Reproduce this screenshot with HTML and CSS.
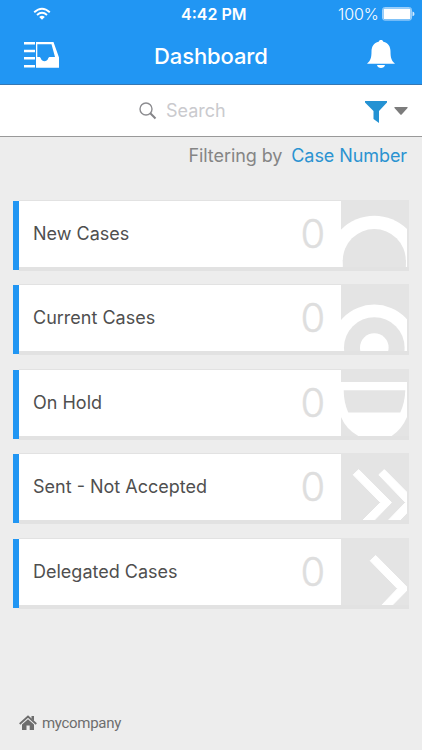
FILE: index.html
```
<!DOCTYPE html>
<html lang="en">
<head>
<meta charset="utf-8">
<title>Dashboard</title>
<link rel="stylesheet" href="styles.css">
</head>
<body>
<header class="top">
  <div class="status">
    <svg class="wifi" viewBox="0 0 18 14" width="18" height="14"><g fill="none" stroke="#fff" stroke-width="1.9"><path d="M1.2 5.2Q9-1.8 16.8 5.2"/><path d="M4 8Q9 3.600 14 8"/></g><path d="M6.200 9.900Q9 7.700 11.800 9.900L9 12.700z" fill="#fff"/></svg>
    <span class="time">4:42 PM</span>
    <span class="percent">100%</span>
    <svg class="battery" viewBox="0 0 33 14" width="33" height="14"><rect x=".6" y=".6" width="28.800" height="12.500" rx="2" fill="#2196f3" stroke="#a9d6fb"/><rect x="1.500" y="1.500" width="27" height="10.700" rx="1" fill="#fff"/><path d="M30.500 4.500q2 .5 2 2.400t-2 2.400z" fill="#d3eafd"/></svg>
  </div>
  <div class="nav">
    <svg class="inbox" viewBox="0 0 36 28" width="36" height="28"><path d="M0 1h11v2.500H0zM0 8.800h11v2.500H0zM0 16h11v2.500H0zM0 24h11v2.500H0z" fill="#fff"/><path fill="#fff" fill-rule="evenodd" d="M12 1h17.500L35 16.500v10.300H12zM13.300 3.300v12.700h1.700c1.200 0 1.600.6 1.900 1.500 1 3.500 6.200 3.500 7.200 0 .3-.9.800-1.500 1.900-1.500H31L27.500 3.300z"/></svg>
    <h1 class="title">Dashboard</h1>
    <svg class="bell" viewBox="0 0 30 30" width="30" height="30"><path fill="#fff" d="M15 1c1.300 0 2 .7 2.300 1.700 5 1 7.200 5 7.200 9.800 0 6.500 1 9 4.500 12.300H1C4.500 21.500 5.500 19 5.500 12.500c0-4.800 2.200-8.800 7.200-9.800C13 1.700 13.700 1 15 1zM11 26h8c-.5 4-7.500 4-8 0z"/></svg>
  </div>
</header>
<div class="search">
  <svg class="glass" viewBox="0 0 18 18" width="18" height="18"><circle cx="7" cy="7" r="6" fill="none" stroke="#8c8c90" stroke-width="1.400"/><path d="M11.300 11.300l5.200 5.200" stroke="#858589" stroke-width="2"/></svg>
  <span class="placeholder">Search</span>
  <svg class="funnel" viewBox="0 0 22 22" width="22" height="22"><path fill="#2492d3" d="M0 0h22v1.500l-8 8.500v12l-5.500-4v-8L0 1.500z"/></svg>
  <svg class="caret" viewBox="0 0 14 8" width="14" height="8"><path fill="#7c7c7c" d="M.7 0h12.600q.7.300.2 1L7.700 7.500q-.7.500-1.400 0L.5 1Q0 .3.700 0z"/></svg>
</div>
<div class="filter"><span class="by">Filtering by</span><span class="key">Case Number</span></div>
<main class="cards">
  <section class="card"><h2 class="label">New Cases</h2><span class="count">0</span>
    <div class="art"><svg viewBox="0 1 66 66" width="66" height="66"><circle cx="33.300" cy="62.500" r="46.800" fill="#fff"/><circle cx="33.300" cy="60.500" r="31.500" fill="#e4e4e4"/><path d="M1.800 60h63v8h-63z" fill="#e4e4e4"/></svg></div></section>
  <section class="card"><h2 class="label">Current Cases</h2><span class="count">0</span>
    <div class="art"><svg viewBox="0 1 66 66" width="66" height="66"><circle cx="33.300" cy="64.400" r="43.800" fill="#fff"/><circle cx="33.300" cy="63.600" r="30.300" fill="#e4e4e4"/><circle cx="33.300" cy="63.600" r="14.300" fill="#fff"/></svg></div></section>
  <section class="card"><h2 class="label">On Hold</h2><span class="count">0</span>
    <div class="art"><svg viewBox="0 1 66 66" width="66" height="66"><path fill="#fff" d="M0 12.900h66v35q-5 12-15.300 19.100H17.300Q5 60 0 47.900z"/><path fill="#e4e4e4" d="M2.700 21.200h61.600q-.3 12-5 22.300h-52q-4.600-10.300-4.600-22.300z"/></svg></div></section>
  <section class="card"><h2 class="label">Sent - Not Accepted</h2><span class="count">0</span>
    <div class="art"><svg viewBox="0 1 66 66" width="66" height="66"><g fill="#fff" stroke="#fff" stroke-linejoin="round"><path d="M12.200 21.800l5.500-5.200L50.500 49.500 32.500 68H21L39.500 49.500z"/><path d="M37.800 21.800l5.500-5.200L76 49.500 58 68H46.600L64.500 49.500z"/></g></svg></div></section>
  <section class="card"><h2 class="label">Delegated Cases</h2><span class="count">0</span>
    <div class="art"><svg viewBox="0 1 66 66" width="66" height="66"><path fill="#fff" stroke="#fff" stroke-linejoin="round" d="M29.200 22.700l5.500-5.200L67.500 50.700 50 68.500H39.500L56.500 50.700z"/></svg></div></section>
</main>
<footer class="footer"><svg viewBox="0 0 18 16" width="18" height="16"><path d="M.7 9L9 1.500 17.300 9" fill="none" stroke="#6d6d6d" stroke-width="1.800"/><path fill="#6d6d6d" d="M12.500 1H15v5l-2.500-2.200zM9 4.200l6 5.400V15h-4.300v-4.500H7.500V15H3V9.600z"/></svg><span class="company">mycompany</span></footer>
</body>
</html>
```
FILE: styles.css
```
* { box-sizing: border-box; }
body {
  margin: 0;
  height: 750px;
  display: flex;
  flex-direction: column;
  overflow: hidden;
  background: #ededed;
  font-family: Inter, "Liberation Sans", sans-serif;
}
svg { display: block; flex: none; }
h1, h2 { margin: 0; }
span, h1, h2 { white-space: nowrap; }
.top {
  height: 85px;
  flex: none;
  background: #2196f3;
  border-bottom: 1px solid #3577b3;
  color: #fff;
}
.status {
  height: 28px;
  display: grid;
  grid-template-columns: 33px 148px 157px 44px 33px;
  align-items: center;
}
.wifi { grid-column: 2; margin-top: -1px; }
.time { grid-column: 3; font-size: 16px; font-weight: 600; letter-spacing: 0; }
.percent { grid-column: 4; font-size: 16px; font-weight: 300; letter-spacing: -0.100px; }
.status .time, .status .percent { line-height: 28px; }
.nav {
  height: 56px;
  display: grid;
  grid-template-columns: 24px 130px 212px 30px;
}
.inbox { grid-column: 2; margin-top: 13px; }
.title { grid-column: 3; font-size: 22px; font-weight: 500; line-height: 56px; letter-spacing: -0.100px; }
.bell { grid-column: 4; margin-top: 11px; }
.search {
  height: 52px;
  flex: none;
  display: flex;
  align-items: center;
  background: #fff;
  border-bottom: 1px solid #999;
  padding-left: 139px;
}
.placeholder { width: 199px; margin-left: 9px; color: #cacace; font-size: 18px; }
.funnel { margin-top: 2px; }
.caret { margin-left: 7px; }
.filter {
  height: 63px;
  flex: none;
  display: flex;
  justify-content: flex-end;
  gap: 9px;
  padding-right: 15px;
  line-height: 38px;
  font-size: 18px;
  letter-spacing: -0.080px;
}
.by { color: #858585; }
.key { color: #2b93d1; }
.cards { display: flex; flex-direction: column; gap: 13.400px; padding-left: 13px; }
.card {
  width: 395.500px;
  height: 71px;
  flex: none;
  display: grid;
  grid-template-columns: 269px 59px 67.500px;
  grid-template-rows: 71px;
  background:
    linear-gradient(#2196f3, #2196f3) 0 1px / 6px 69px no-repeat,
    linear-gradient(#ededed, #ededed) 0 0 / 6px 71px no-repeat,
    linear-gradient(#fff, #fff) 6px 1px / 322px 66px no-repeat,
    #e2e2e2;
}
.label { padding-left: 20px; color: #4f4f4f; font-size: 18px; font-weight: 400; line-height: 67px; }
.count { padding-left: 18.500px; color: #dedede; font-size: 40px; font-weight: 300; line-height: 68px; -webkit-text-stroke: 0.400px #dedede; }
.art { background: #e4e4e4; padding-top: 1px; height: 67px; }
.footer { display: flex; align-items: center; gap: 5px; margin-top: 105px; padding-left: 19px; color: #6d6d6d; }
.company { font: 15px/18px Roboto, sans-serif; letter-spacing: -0.300px; }
```
